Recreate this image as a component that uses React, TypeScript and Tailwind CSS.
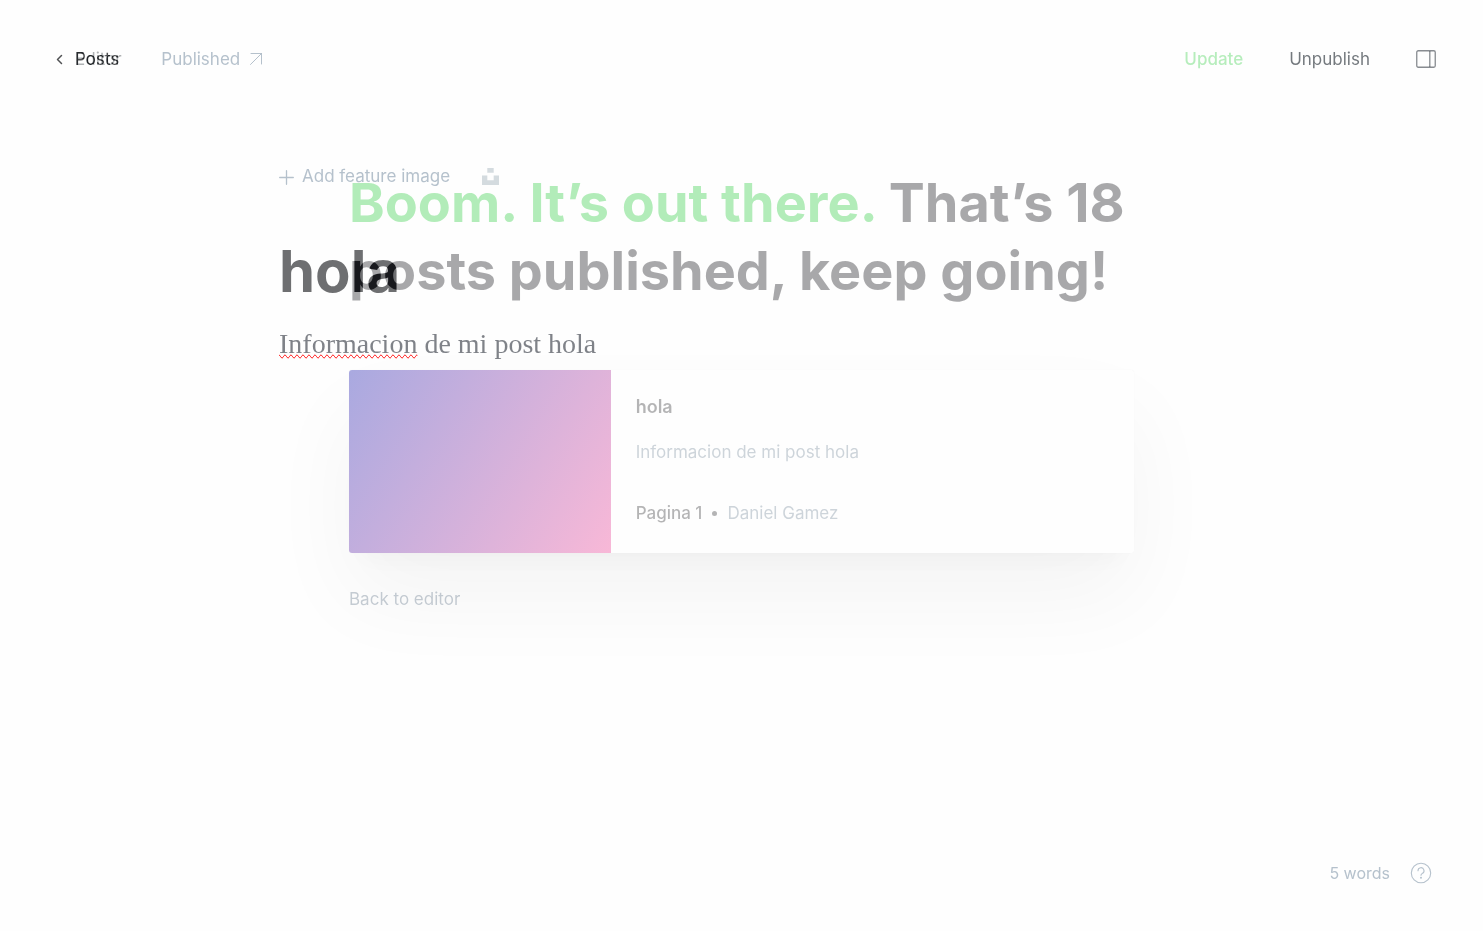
import React from "react";

function EditorScreen() {
  return (
    <div className="col-start-1 row-start-1 flex min-h-screen flex-col mix-blend-plus-lighter">
      <header className="flex h-[118px] items-center justify-between pl-14 pr-[47px]">
        <nav className="flex items-center gap-[42px]">
          <a href="#posts" className="flex items-center gap-3 text-[#15171a]/75">
            <svg viewBox="0 0 7 11" className="h-[11px] w-[7px]" fill="none" stroke="currentColor" strokeWidth="1.5" strokeLinecap="round" strokeLinejoin="round">
              <path d="M5.5 1.5 1.5 5.5l4 4" />
            </svg>
            Posts
          </a>
          <a href="#published" className="flex items-center gap-[10px] text-[#a3b1bf]/80">
            Published
            <svg viewBox="0 0 12 12" className="size-3" fill="none" stroke="currentColor" strokeWidth="1" strokeLinecap="round" strokeLinejoin="round">
              <path d="M.5 11.5l11-11M1 .5h10.500V11" />
            </svg>
          </a>
        </nav>
        <div className="flex items-center gap-[46px]">
          <button type="button" className="font-medium text-[#30cf43]/35">Update</button>
          <button type="button" className="text-[#394047]/70">Unpublish</button>
          <button type="button" aria-label="Settings" className="text-[#394047]/60">
            <svg viewBox="0 0 20 18" className="h-[18px] w-5" fill="none" stroke="currentColor" strokeWidth="1.300">
              <rect x=".75" y=".75" width="18.500" height="16.500" rx="1.500" />
              <path d="M13.800 1v16" />
            </svg>
          </button>
        </div>
      </header>
      <main className="mx-auto mt-[46px] flex w-full max-w-[925px] flex-1 flex-col">
        <div className="flex h-6 items-center gap-8">
          <button type="button" className="flex items-center gap-2 text-[#a3b1bf]/80">
            <svg viewBox="0 0 15 15" className="mt-0.5 size-[15px]" fill="none" stroke="currentColor" strokeWidth="1.300" strokeLinecap="round">
              <path d="M7.500.7v13.600M.7 7.500h13.600" />
            </svg>
            Add feature image
          </button>
          <button type="button" aria-label="Unsplash" className="text-[#ccd5d9]/85">
            <svg viewBox="0 0 17 17" className="size-[17px]" fill="currentColor">
              <path d="M5.300 0h6.400v4.800H5.300zM0 7.500h5.300v4.800h6.400V7.500H17V17H0z" />
            </svg>
          </button>
        </div>
        <input
          aria-label="Post title"
          defaultValue="hola"
          className="mt-[45px] h-[76px] w-full bg-transparent text-[58px] font-bold text-[#15171a]/62 outline-none"
        />
        <p className="mt-[17px] font-['Liberation_Serif',serif] text-[28px] leading-9 text-[#2a2f38]/60">
          <span className="[text-decoration-line:spelling-error]">Informacion</span> de mi post hola
        </p>
      </main>
      <footer className="flex h-[116px] items-center justify-end gap-5 pr-[51px] text-[#a3b1bf]/80">
        <span className="text-[16px]">5 words</span>
        <button type="button" aria-label="Help">
          <svg viewBox="0 0 22 22" className="size-[22px]" fill="none" stroke="currentColor" strokeWidth="1.100" strokeLinecap="round">
            <circle cx="11" cy="11" r="9.700" />
            <path d="M8 8.700a3 3 0 1 1 4.300 2.700c-.9.400-1.300.9-1.300 1.900" />
            <circle cx="11" cy="15.700" r=".4" fill="currentColor" />
          </svg>
        </button>
      </footer>
    </div>
  );
}

function PublishedScreen() {
  return (
    <div className="pointer-events-none col-start-1 row-start-1 flex min-h-screen flex-col mix-blend-plus-lighter">
      <header className="flex h-[118px] items-center pl-[75px]">
        <a href="#editor" className="text-[#394047]/40">Editor</a>
      </header>
      <main className="mx-auto mt-[51px] w-full max-w-[785px]">
        <h1 className="text-[54px] font-bold leading-[68px] text-[#15171a]/37">
          <span className="text-[#30cf43]/37">Boom. It’s out there.</span> That’s 18 posts published, keep going!
        </h1>
        <article className="mt-[65px] flex h-[183px] overflow-hidden rounded-[3px] bg-white/37 shadow-[0_0_1px_rgba(0,0,0,0.08),0_18px_28px_-10px_rgba(0,0,0,0.03),0_44px_90px_rgba(0,0,0,0.045)]">
          <div className="w-1/3 bg-linear-[122deg] from-[#a9a9e0] to-[#f8b8d7]" />
          <div className="flex flex-1 flex-col px-[25px] pt-6 text-[17px] leading-[26px] text-[#5b7083]/30">
            <h2 className="text-[18px] font-semibold text-[#15171a]/32">hola</h2>
            <p className="mt-[19px]">Informacion de mi post hola</p>
            <div className="mt-[35px] flex items-center gap-[10px]">
              <span className="font-medium text-[#15171a]/32">Pagina 1</span>
              <span className="size-[5px] rounded-full bg-[#15171a]/32" />
              <span>Daniel Gamez</span>
            </div>
          </div>
        </article>
        <button type="button" className="mt-[34px] leading-6 text-[#5b7083]/35">Back to editor</button>
      </main>
    </div>
  );
}

export default function App() {
  return (
    <div className="min-h-screen bg-[#fefefe] font-['Inter',sans-serif] text-[17px] leading-6">
      <div className="isolate grid grid-cols-1">
        <EditorScreen />
        <PublishedScreen />
      </div>
    </div>
  );
}
